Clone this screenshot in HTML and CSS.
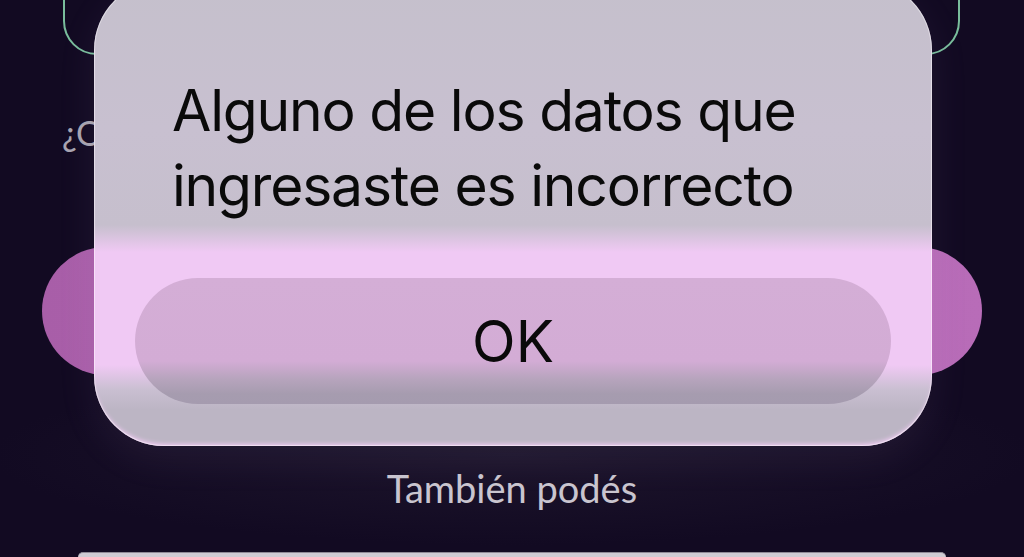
FILE: index.html
```html
<!DOCTYPE html>
<html lang="es">
<head>
<meta charset="utf-8">
<title>Error</title>
<link rel="stylesheet" href="styles.css">
</head>
<body>
<div class="screen">
  <div class="field"></div>
  <p class="question">¿Olvidaste tu contraseña?</p>
  <div class="primary"></div>
  <p class="also">También podés</p>
  <div class="secondary"></div>
</div>
<div class="alert" role="alertdialog">
  <p class="alert-msg">Alguno de los datos que<br>ingresaste es incorrecto</p>
  <button class="alert-btn" type="button">OK</button>
</div>
</body>
</html>
```
FILE: styles.css
```css
html, body {
  margin: 0;
  padding: 0;
}
body {
  width: 1024px;
  height: 557px;
  overflow: hidden;
  position: relative;
  background: #120a22;
  font-family: Lato, "Noto Sans", sans-serif;
}
.screen {
  display: flex;
  flex-direction: column;
  background: radial-gradient(ellipse 520px 90px at 512px 455px, #1d152c 0%, rgba(18,10,34,0) 100%);
  height: 557px;
  overflow: hidden;
}
.field {
  margin: -42px 0 0 63px;
  width: 893px;
  height: 93px;
  border: 2px solid #79bd9c;
  border-radius: 34px;
  flex: none;
}
.question {
  margin: 58px 0 0 62px;
  font-size: 34px;
  line-height: 40px;
  color: #a8a4b0;
  white-space: nowrap;
}
.primary {
  margin: 94px 42px 0 42px;
  height: 128px;
  border-radius: 64px;
  background: linear-gradient(to right, #a85ea8, #b86cb8);
  flex: none;
}
.also {
  margin: 90px 0 0 0;
  text-align: center;
  font-size: 38px;
  line-height: 46px;
  color: #c9c5cf;
}
.secondary {
  margin: 41px 78px 0 78px;
  height: 4px;
  border-radius: 18px 18px 0 0;
  background: #cfcbd3;
  border-top: 1px solid #8f8a96;
  flex: none;
}
.alert {
  position: absolute;
  left: 94px;
  top: -20px;
  width: 838px;
  height: 466px;
  box-sizing: border-box;
  border-radius: 70px;
  padding: 93px 41px 0 41px;
  background: linear-gradient(to bottom,
    #c5c0cc 0px,
    #c8c0d0 150px,
    #c6bfcd 245px,
    #f0c9f4 272px,
    #f0c9f4 385px,
    #c9bfd1 410px,
    #bcb5c4 430px,
    #bcb5c4 100%);
  box-shadow:
    inset 0 0 0 1px rgba(255,255,255,0.45),
    inset 0 -4px 4px -2px #f1caf4,
    0 12px 40px rgba(190,170,215,0.08);
}
.alert-msg {
  margin: 0 0 0 37px;
  font-family: Inter, "Liberation Sans", sans-serif;
  font-size: 57px;
  line-height: 75px;
  letter-spacing: -1.2px;
  color: #0a0a0a;
  white-space: nowrap;
}
.alert-btn {
  display: flex;
  align-items: center;
  justify-content: center;
  margin: 55px 0 0 0;
  width: 100%;
  height: 126px;
  border: none;
  border-radius: 63px;
  padding: 0;
  background: linear-gradient(to bottom,
    #d4aed6 0%,
    #d3acd5 66%,
    #b7a4bd 80%,
    #a69caf 92%,
    #a59baf 100%);
  font-family: Inter, "Liberation Sans", sans-serif;
  font-size: 57px;
  color: #0a0a0a;
}
```
